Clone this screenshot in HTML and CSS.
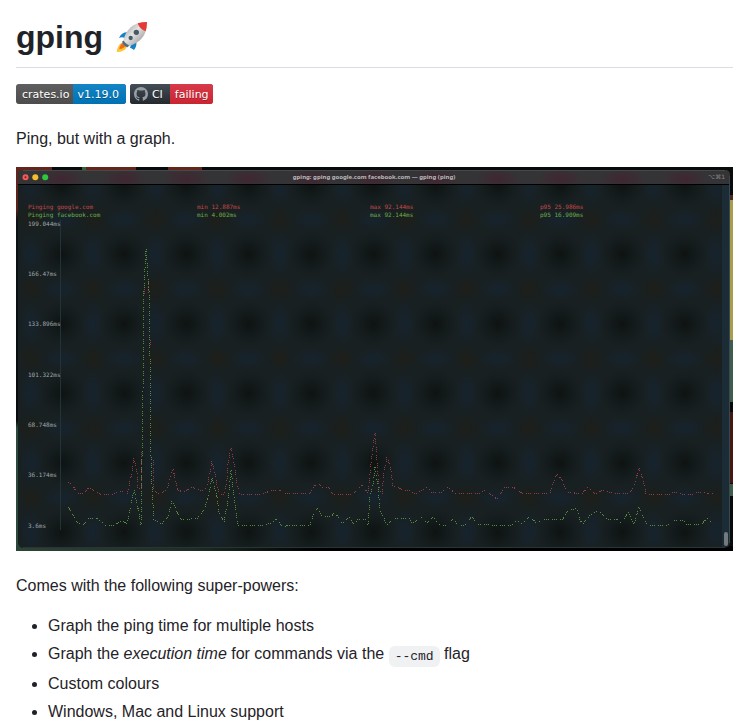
FILE: index.html
```html
<!DOCTYPE html>
<html lang="en">
<head>
<meta charset="utf-8">
<meta name="viewport" content="width=device-width, initial-scale=1">
<title>gping</title>
<link rel="stylesheet" href="styles.css">
</head>
<body>
<article class="readme">
  <h1>gping
    <svg class="rocket" viewBox="345 60 102 102" role="img" aria-label="rocket">
      <defs>
        <linearGradient id="hull" x1="0" y1="0" x2="1" y2="1"><stop offset=".15" stop-color="#a9a9a9"/><stop offset=".45" stop-color="#e4e4e4"/><stop offset=".85" stop-color="#9a9a9a"/></linearGradient>
      </defs>
      <path d="M382 97q-18 0-25 17 8-4 17 0zM409 124q2 16-7 26-5-4-12-7l4-12z" fill="#1681c4"/>
      <path d="M366 128c-12 6-14 18-16 28 12 0 24-3 30-14z" fill="#fdc32c"/>
      <path d="M368 129c-7 4-9 12-10 18 8 0 14-3 18-9z" fill="#ef6a21"/>
      <path d="M366 125l8-6 16 15-7 8q-12-3-17-17z" fill="#526d7a"/>
      <path d="M370 121C378 90 398 66 441 66c0 42-22 63-53 71q-12-5-18-16z" fill="url(#hull)"/>
      <path d="M413 70q14-4 28-4 0 14-4 28-18-6-24-24z" fill="#e53935"/>
      <circle cx="409" cy="97" r="8" fill="#455a64"/><circle cx="392" cy="114" r="6.500" fill="#455a64"/>
    </svg></h1>
  <div class="badges">
    <a class="badge" href="#crate"><span class="badge-label">crates.io</span><span class="badge-value version">v1.19.0</span></a>
    <a class="badge ci" href="#ci"><span class="badge-label"><svg class="mark" viewBox="0 0 16 16" aria-hidden="true"><path d="M8 0C3.58 0 0 3.58 0 8c0 3.54 2.29 6.53 5.47 7.59.4.07.55-.17.55-.38 0-.19-.01-.82-.01-1.49-2.01.37-2.53-.49-2.69-.94-.09-.23-.48-.94-.82-1.13-.28-.15-.68-.52-.01-.53.63-.01 1.08.58 1.23.82.72 1.21 1.87.87 2.33.66.07-.52.28-.87.51-1.07-1.78-.2-3.64-.89-3.64-3.95 0-.87.31-1.59.82-2.15-.08-.2-.36-1.02.08-2.12 0 0 .67-.21 2.2.82.64-.18 1.32-.27 2-.27s1.36.09 2 .27c1.53-1.04 2.2-.82 2.2-.82.44 1.1.16 1.92.08 2.12.51.56.82 1.27.82 2.15 0 3.07-1.87 3.75-3.65 3.95.29.25.54.73.54 1.48 0 1.07-.01 1.93-.01 2.2 0 .21.15.46.55.38A8.01 8.01 0 0 0 16 8c0-4.42-3.58-8-8-8z"/></svg>CI</span><span class="badge-value failing">failing</span></a>
  </div>
  <p>Ping, but with a graph.</p>
  <svg class="terminal" viewBox="16 167 717 384" role="img" aria-label="gping running in a terminal">
    <defs>
      <radialGradient id="dark"><stop offset="0" stop-color="#0e1312"/><stop offset=".35" stop-color="#101615" stop-opacity=".75"/><stop offset="1" stop-color="#141b1d" stop-opacity="0"/></radialGradient>
      <radialGradient id="blue"><stop offset="0" stop-color="#162430" stop-opacity=".85"/><stop offset="1" stop-color="#162430" stop-opacity="0"/></radialGradient>
      <radialGradient id="brown"><stop offset="0" stop-color="#1d1f1a"/><stop offset="1" stop-color="#1d1f1a" stop-opacity="0"/></radialGradient>
      <radialGradient id="plum"><stop offset="0" stop-color="#402631"/><stop offset="1" stop-color="#402631" stop-opacity="0"/></radialGradient>
      <pattern id="weave" x="30.700" y="219.500" width="62.300" height="69.500" patternUnits="userSpaceOnUse">
        <rect width="63" height="70" fill="#182022"/>
        <circle cx="0" cy="0" r="16" fill="url(#brown)"/><circle cx="62.300" cy="0" r="16" fill="url(#brown)"/>
        <circle cx="0" cy="69.500" r="16" fill="url(#brown)"/><circle cx="62.300" cy="69.500" r="16" fill="url(#brown)"/>
        <ellipse cx="0" cy="34.700" rx="12" ry="23" fill="url(#blue)"/><ellipse cx="62.300" cy="34.700" rx="12" ry="23" fill="url(#blue)"/>
        <ellipse cx="31.100" cy="0" rx="20" ry="11" fill="url(#blue)"/><ellipse cx="31.100" cy="69.500" rx="20" ry="11" fill="url(#blue)"/>
        <circle cx="31.100" cy="34.700" r="24" fill="url(#dark)"/>
      </pattern>
      <pattern id="bar" x="30.700" y="170" width="62.300" height="14" patternUnits="userSpaceOnUse">
        <rect width="63" height="14" fill="#343436"/>
        <ellipse cx="31.100" cy="9" rx="24" ry="12" fill="url(#plum)"/>
      </pattern>
      <linearGradient id="floor"><stop offset="0" stop-color="#2c4436"/><stop offset=".25" stop-color="#1b2c24"/><stop offset=".42" stop-color="#000"/></linearGradient>
      <linearGradient id="edge" x2="0" y2="1"><stop offset="0" stop-color="#63261c"/><stop offset=".11" stop-color="#59211a"/><stop offset=".14" stop-color="#0b1216"/><stop offset=".66" stop-color="#080b0c"/><stop offset=".68" stop-color="#2c4a3c"/><stop offset="1" stop-color="#2c4a3c"/></linearGradient>
    </defs>
    <rect x="16" y="167" width="717" height="384" fill="#080b0c"/>
    <rect x="16" y="167" width="3" height="384" fill="url(#edge)"/>
    <path d="M16 167h36v4H16zM86 167h50v4H86zM168 167h34v4h-34z" fill="#63261c"/>
    <path d="M82 167h4v3h-4z" fill="#346334"/>
    <rect x="16" y="546" width="717" height="5" fill="url(#floor)"/>
    <path d="M729 195h4v5h-4z" fill="#4a2725"/><path d="M729 200h4v140h-4z" fill="#a99c4c"/>
    <path d="M729 340h4v62h-4zM729 484h4v12h-4z" fill="#3e5b4c"/><path d="M729 412h4v71h-4z" fill="#461610"/>
    <rect x="18" y="170" width="712" height="378" rx="5" fill="url(#weave)"/>
    <path d="M18 184v-9q0-5 5-5h702q5 0 5 5v9z" fill="url(#bar)"/>
    <path d="M23 170.500h702" stroke="#48484a"/>
    <path d="M18 184.500h712" stroke="#000"/>
    <path d="M722 185h7v358q0 4-4 4h-3z" fill="#1b2c36"/>
    <path d="M729.500 176v367" stroke="#374850"/>
    <path d="M23 547.500h702" stroke="#293436"/>
    <rect x="724" y="532" width="4" height="14" rx="2" fill="#74797d"/>
    <circle cx="25.500" cy="177.300" r="3" fill="#f25b57"/><circle cx="25.500" cy="177.300" r="1" fill="#8c1710"/>
    <circle cx="35.300" cy="177.300" r="3" fill="#f8bd2f"/><circle cx="45.200" cy="177.300" r="3" fill="#2bc840"/>
    <text class="window-title" x="374" y="179" text-anchor="middle">gping: gping google.com facebook.com — gping (ping)</text>
    <text class="shortcut" x="725" y="179" text-anchor="end">⌥⌘1</text>
    <path d="M60.500 220v310" stroke="#22323a"/>
    <g class="mono red"><text x="28" y="209">Pinging google.com</text><text x="197" y="209">min 12.887ms</text><text x="370" y="209">max 92.144ms</text><text x="540" y="209">p95 25.986ms</text></g>
    <g class="mono green"><text x="28" y="217">Pinging facebook.com</text><text x="197" y="217">min 4.002ms</text><text x="370" y="217">max 92.144ms</text><text x="540" y="217">p95 16.909ms</text></g>
    <g class="mono axis"><text x="28" y="226">199.044ms</text><text x="28" y="276">166.47ms</text><text x="28" y="326">133.896ms</text><text x="28" y="377">101.322ms</text><text x="28" y="427">68.748ms</text><text x="28" y="477">36.174ms</text><text x="28" y="528">3.6ms</text></g>
    <path class="trace red-trace" d="M68 482 72 484 77 493 84 494 89 487 93 490 102 495 113 494 122 491 127 494 129 486 132 472 134 458 137 472 138 488 141 490 142 452M144 294 145 282M148 282V294M150 340V346M153 460V490L160 494 167 490 170 478 173 469 175 478 178 490 183 492 192 487 202 491 207 487 209 477 212 461 216 477 217 487 220 494 224 494 227 480 228 463 231 448 234 463 237 483 240 494 248 494 263 494 272 490 280 490 283 493 300 493 310 494 314 487 317 483 322 487 328 487 333 494 353 494 362 485 368 493 370 473 373 447 375 433 377 460 379 487 382 494 384 472 387 457 391 470 393 486 398 487 402 490 408 490 415 494 427 487 432 493 442 492 447 487 455 493 480 494 485 490 490 494 497 499 500 494 505 487 513 487 522 493 550 493 553 483 557 474 562 480 567 492 582 494 588 487 595 494 603 490 612 493 630 493 635 483 639 468 643 480 646 494 668 495 673 492 682 494 693 494 699 492 713 494"/>
    <polyline class="trace green-trace" points="68,507 73,515 77,522 84,525 88,519 97,518 105,525 115,525 122,520 127,524 130,510 134,490 137,503 141,525 143,390 144,290 146,248 149,290 149,350 150,357 151,457 152,487 154,520 162,524 168,517 172,500 177,512 182,520 198,518 205,508 209,493 212,477 217,497 219,512 224,523 228,500 231,470 235,503 238,525 248,525 263,525 272,523 276,519 283,527 290,525 310,525 314,513 317,508 322,516 332,516 335,512 342,524 349,517 354,524 358,519 365,519 368,525 370,497 373,485 375,467 378,487 380,510 387,525 395,518 410,519 412,524 421,517 427,523 433,517 440,525 447,525 453,519 458,525 465,525 472,516 477,524 490,525 512,525 517,520 522,524 530,516 537,524 542,519 562,520 568,511 577,508 580,520 583,524 590,515 598,510 607,519 617,519 622,524 628,512 634,525 639,507 647,525 668,525 673,520 683,520 687,525 702,524 707,518 713,524"/>
  </svg>
  <p>Comes with the following super-powers:</p>
  <ul>
    <li>Graph the ping time for multiple hosts</li>
    <li>Graph the <em>execution time</em> for commands via the <code>--cmd</code> flag</li>
    <li>Custom colours</li>
    <li>Windows, Mac and Linux support</li>
  </ul>
</article>
</body>
</html>
```
FILE: styles.css
```css
body {
  margin: 0;
  background: #fff;
  color: #1f2328;
  font: 16px/24px "Liberation Sans", Arial, sans-serif;
}
.readme { padding: 17px 13px 0 16px; }
h1 {
  display: flex;
  align-items: center;
  gap: 12px;
  margin: 0 0 16px;
  padding-bottom: 10px;
  border-bottom: 1px solid #d9dee4;
  font-size: 32px;
  line-height: 40px;
  font-weight: 600;
}
.rocket {
  width: 34px;
  height: 34px;
}
p { margin: 0 0 16px; }
.badges {
  display: flex;
  gap: 4px;
  margin-bottom: 23px;
}
.badge {
  display: flex;
  height: 20px;
  overflow: hidden;
  border-radius: 3px;
  background: #555;
  color: #fff;
  font: 11px/21px "DejaVu Sans", Verdana, sans-serif;
  text-decoration: none;
  text-shadow: 0 1px 0 rgba(1, 1, 1, .3);
}
.badge-label,
.badge-value {
  display: flex;
  align-items: center;
  background-image: linear-gradient(rgba(187, 187, 187, .1), rgba(0, 0, 0, .1));
}
.badge-label { padding: 0 4px 0 6px; }
.badge-value { padding: 0 7px 0 4px; }
.version { background-color: #007ec6; }
.ci .badge-label {
  gap: 4px;
  padding: 0 7px 0 4px;
  background: linear-gradient(#444d56, #24292e);
}
.ci .badge-value { padding: 0 4px 0 5px; }
.badge .failing { background: linear-gradient(#d73a49, #cb2431); }
.mark {
  width: 14px;
  height: 14px;
  fill: #959da5;
}
.terminal {
  display: block;
  width: 100%;
  margin-bottom: 23px;
}
.window-title {
  fill: #b9b9bb;
  font: bold 6px "Noto Sans", sans-serif;
}
.shortcut {
  fill: #8a8a8d;
  font: 6px "DejaVu Sans", sans-serif;
}
.mono { font: 6px "DejaVu Sans Mono", monospace; }
.red { fill: #c5484a; }
.green { fill: #6fae4b; }
.axis { fill: #a0a8aa; }
.trace {
  fill: none;
  stroke-width: 1;
  stroke-dasharray: 1 1 1 1 1 3;
  shape-rendering: crispEdges;
}
.red-trace { stroke: #8e3d42; }
.green-trace { stroke: #568a3c; }
ul {
  margin: 0 0 16px;
  padding-left: 32px;
}
li + li { margin-top: 4px; }
code {
  padding: 3px 6px;
  border-radius: 6px;
  background: #eff1f3;
  font: 13px/22px "Liberation Mono", monospace;
  vertical-align: -1px;
}
```
